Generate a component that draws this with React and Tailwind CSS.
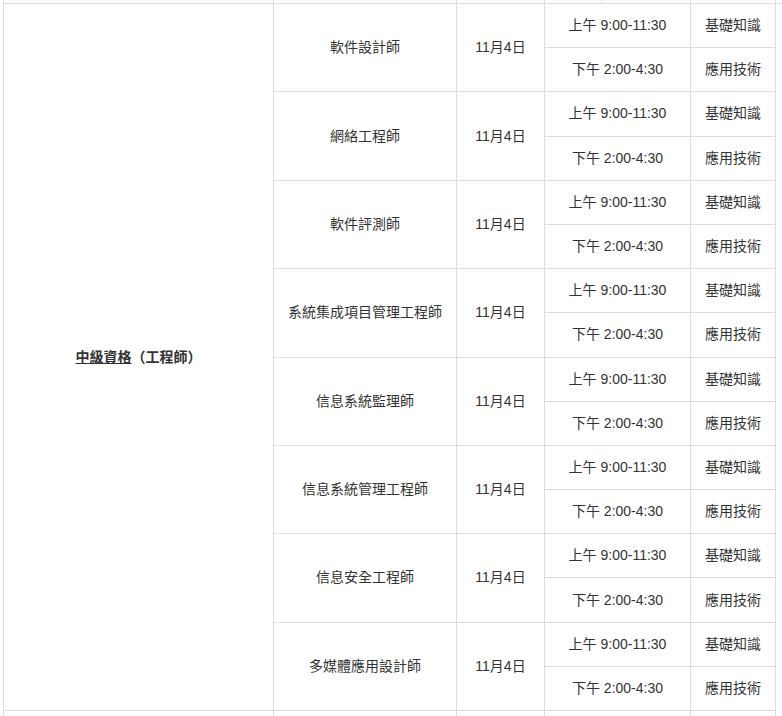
const courses = [
  '軟件設計師',
  '網絡工程師',
  '軟件評測師',
  '系統集成項目管理工程師',
  '信息系統監理師',
  '信息系統管理工程師',
  '信息安全工程師',
  '多媒體應用設計師',
]

const cell = 'flex items-center justify-center border-r border-b border-[#dddddd] text-center'

export default function App() {
  return (
    <div className="w-[782px] h-[716px] overflow-hidden bg-white pl-[3px] text-[14px] text-[#333333] font-['Liberation_Sans','Noto_Sans_CJK_TC',sans-serif]">
      {/* tail of the row above */}
      <div className="grid h-[3px] grid-cols-[270px_183px_88px_57px_89px_85px] border-l border-[#dddddd]">
        <div className="border-r border-[#dddddd]" />
        <div className="border-r border-[#dddddd]" />
        <div className="border-r border-[#dddddd]" />
        <div className="border-r border-[#dddddd]" />
        <div className="border-r border-[#dddddd]" />
        <div className="border-r border-[#dddddd]" />
      </div>

      <div className="grid grid-cols-[270px_183px_88px_146px_85px] auto-rows-[44.2px] border-l border-t border-[#dddddd]">
        <div className={`${cell} row-span-16 font-bold`}>
          <span>
            <span className="underline">中級資格</span>（工程師）
          </span>
        </div>
        {courses.map((name, i) => (
          <Group key={i} name={name} />
        ))}
      </div>

      {/* head of the row below */}
      <div className="grid h-[6px] grid-cols-[270px_183px_88px_146px_85px] border-l border-[#dddddd]">
        <div className="border-r border-[#dddddd]" />
        <div className="border-r border-[#dddddd]" />
        <div className="border-r border-[#dddddd]" />
        <div className="border-r border-[#dddddd]" />
        <div className="border-r border-[#dddddd]" />
      </div>
    </div>
  )
}

function Group({ name }) {
  return (
    <>
      <div className={`${cell} row-span-2`}>{name}</div>
      <div className={`${cell} row-span-2`}>11月4日</div>
      <div className={cell}>上午 9:00-11:30</div>
      <div className={cell}>基礎知識</div>
      <div className={cell}>下午 2:00-4:30</div>
      <div className={cell}>應用技術</div>
    </>
  )
}
